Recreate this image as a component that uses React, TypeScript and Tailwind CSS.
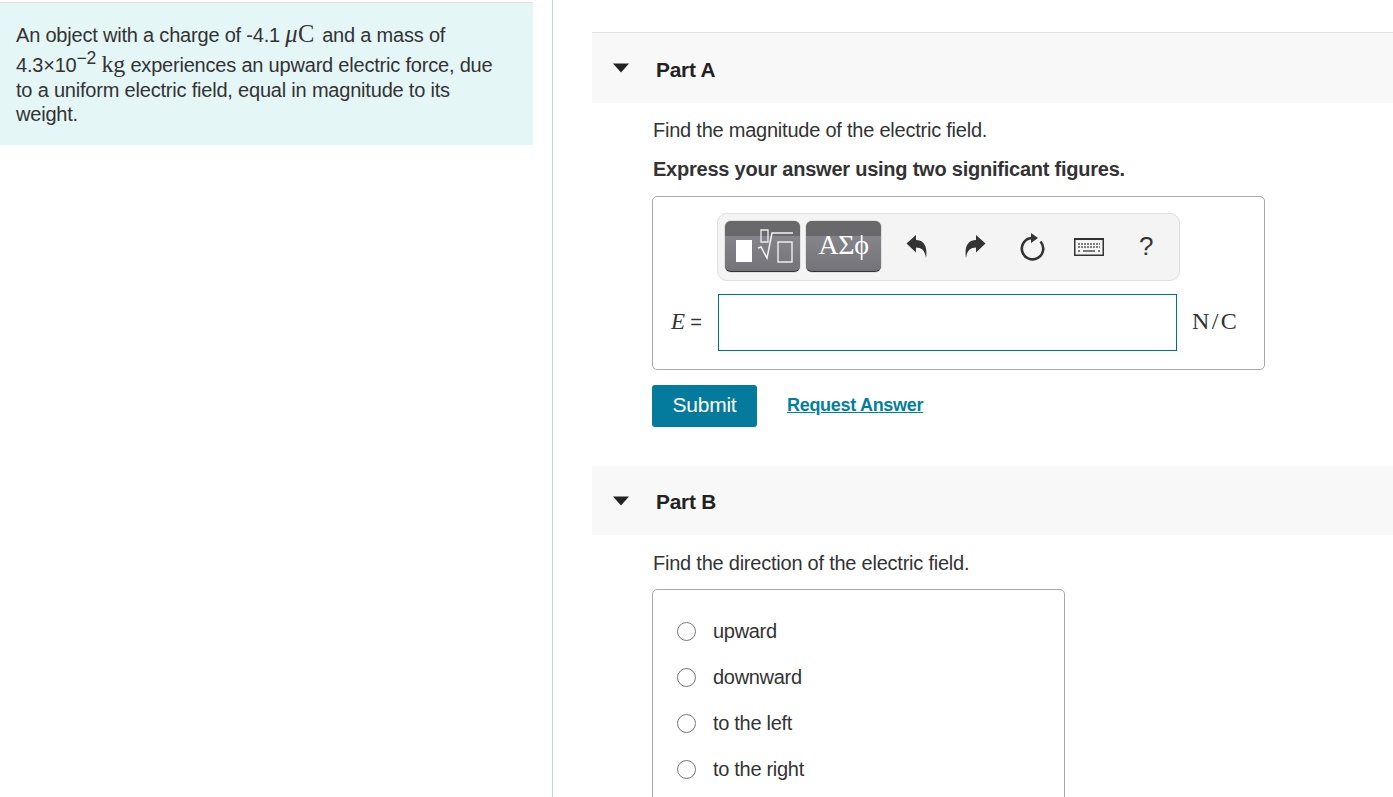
const math = { fontFamily: '"Liberation Serif", serif' };

const Triangle = () => (
  <svg width="16" height="10" viewBox="0 0 16 10" className="shrink-0">
    <path d="M0 0.5 H16 L8 9.5 Z" fill="#222" />
  </svg>
);

const PartHeader = ({ title, height, titleTop }: { title: string; height: string; titleTop: string }) => (
  <div className={`flex items-center bg-[#f8f8f8] pl-[21px] ${height}`}>
    <Triangle />
    <span className={`ml-[27px] text-[20.8px] font-bold tracking-[-0.2px] text-[#222] ${titleTop}`}>{title}</span>
  </div>
);

const TemplateButton = ({ children }: { children: React.ReactNode }) => (
  <div className="relative mt-[-1px] flex h-[51px] w-[75px] items-center justify-center overflow-hidden rounded-[6px] border-b border-[#333] bg-gradient-to-b from-[#8c8c92] to-[#737379] shadow-[0_0_1px_#333]">
    <div className="absolute inset-x-0 top-0 h-[15px] bg-[#69696c]" />
    {children}
  </div>
);

const ToolIcons = () => (
  <>
    <svg width="22" height="26" viewBox="0 0 22 26" className="ml-[25px]">
      <path d="M0.5 9.5 L10 1 V6 C17 6 22 11 20 24 C19 17 16 13.5 10 13.5 V18.5 Z" fill="#333" />
    </svg>
    <svg width="22" height="26" viewBox="0 0 22 26" className="ml-[36px]">
      <path d="M21.5 9.5 L12 1 V6 C5 6 0 11 2 24 C3 17 6 13.5 12 13.5 V18.5 Z" fill="#333" />
    </svg>
    <svg width="26" height="28" viewBox="0 0 26 28" className="ml-[33px]">
      <path d="M12.5 5 A10.7 10.7 0 1 0 21.5 8.5" fill="none" stroke="#333" strokeWidth="2.6" />
      <path d="M12 0 L19 5 L12 10 Z" fill="#333" />
    </svg>
    <svg width="30" height="18" viewBox="0 0 30 18" className="ml-[29px]">
      <rect x="0.75" y="1" width="28.5" height="16.25" fill="none" stroke="#333" strokeWidth="1.5" />
      <path d="M0 1 H30" stroke="#333" strokeWidth="2" />
      <path d="M4 6 H26 M4 9 H26" stroke="#555" strokeWidth="1.6" strokeDasharray="2 1" />
      <path d="M4 13 H6 M9 13 H21 M24 13 H26" stroke="#555" strokeWidth="1.6" />
    </svg>
    <span className="ml-[35px] mt-[-2px] text-[26px] leading-none text-[#333]">?</span>
  </>
);

const choices = ['upward', 'downward', 'to the left', 'to the right'];

export default function App() {
  return (
    <div className="flex h-[797px] overflow-hidden bg-white font-['Liberation_Sans',Arial,sans-serif] text-[20px] tracking-[-0.23px] text-[#333]">
      {/* left column: problem text */}
      <div className="w-[533px] shrink-0 pt-[2px]">
        <div className="border-t border-[#e0e0e0] bg-[#e5f6f7] px-4 pb-[19px] pt-[19px] leading-[24px] tracking-[-0.2px]">
          <p className="h-[30px]">
            An object with a charge of -4.1{' '}
            <span className="mr-[2px] text-[24.5px] leading-none tracking-[0.4px]" style={math}><i>μ</i>C</span> and a mass of
          </p>
          <p className="h-[26px]">
            4.3×10<sup className="relative top-[-8px] align-baseline text-[17.5px] leading-none">−2</sup>{' '}
            <span className="text-[24px] leading-none" style={math}>kg</span> experiences an upward electric force, due
          </p>
          <p>to a uniform electric field, equal in magnitude to its</p>
          <p>weight.</p>
        </div>
      </div>

      <div className="ml-[19px] w-px shrink-0 bg-[#c5d3dc]" />

      {/* right column: parts */}
      <div className="ml-[39px] flex-1 pt-[32px]">
        <div className="border-t border-[#e0e0e0]">
          <PartHeader title="Part A" height="h-[70px]" titleTop="mt-[3px]" />
        </div>
        <div className="pl-[60px] pr-[128px]">
          <p className="ml-px mt-[15px] leading-[24px]">Find the magnitude of the electric field.</p>
          <p className="ml-px mt-[15px] font-bold leading-[24px]">Express your answer using two significant figures.</p>

          <div className="mt-[15px] h-[174px] rounded-[5px] border border-[#aaa] pl-[64px] pt-[16px]">
            <div className="flex h-[68px] w-[463px] items-center rounded-[10px] border border-[#e0e0e0] bg-[#f4f4f4] pl-[7px]">
              <TemplateButton>
                <svg width="75" height="51" viewBox="0 0 75 51" className="relative">
                  <rect x="11" y="19" width="16" height="22" fill="#fff" />
                  <path d="M36 9 H43 V21 H36 Z" fill="none" stroke="#eee" strokeWidth="1.3" />
                  <path d="M33 27 L36 26 L42 37 L47 12 H68" fill="none" stroke="#f4f4f4" strokeWidth="1.5" />
                  <path d="M53 21 H67 V41 H53 Z" fill="none" stroke="#eee" strokeWidth="1.4" />
                </svg>
              </TemplateButton>
              <div className="ml-[6px]">
                <TemplateButton>
                  <span className="relative mt-[-2px] text-[28px] leading-none text-white" style={math}>ΑΣϕ</span>
                </TemplateButton>
              </div>
              <ToolIcons />
            </div>

            <div className="mt-[13px] flex items-center">
              <span className="ml-[-46px] mr-[13px] w-[34px] shrink-0 whitespace-nowrap text-[20px]">
                <i className="text-[23px]" style={math}>E</i> =
              </span>
              <div className="h-[57px] w-[459px] shrink-0 border border-[#00708f]" />
              <span className="ml-[15px] mt-[-4px] text-[24px] tracking-[2.4px]" style={math}>N/C</span>
            </div>
          </div>

          <div className="mt-[15px] flex items-center">
            <button className="h-[42px] w-[105px] rounded-[3px] bg-[#047a9c] pb-[2px] text-[21px] text-white">Submit</button>
            <a className="ml-[30px] mt-[-2px] text-[18px] font-bold tracking-[-0.3px] text-[#007fa3] underline">Request Answer</a>
          </div>
        </div>

        <div className="mt-[39px]">
          <PartHeader title="Part B" height="h-[69px]" titleTop="mt-[2px]" />
        </div>
        <div className="pl-[60px]">
          <p className="ml-px mt-[16px] leading-[24px]">Find the direction of the electric field.</p>
          <div className="mt-[14px] h-[300px] w-[413px] rounded-[5px] border border-[#aaa] pl-[24px] pt-[18px]">
            {choices.map((c) => (
              <label key={c} className="flex h-[46px] items-center">
                <span className="h-[19px] w-[19px] rounded-full border border-[#777] bg-white" />
                <span className="ml-[17px] tracking-[-0.3px]">{c}</span>
              </label>
            ))}
          </div>
        </div>
      </div>
    </div>
  );
}
